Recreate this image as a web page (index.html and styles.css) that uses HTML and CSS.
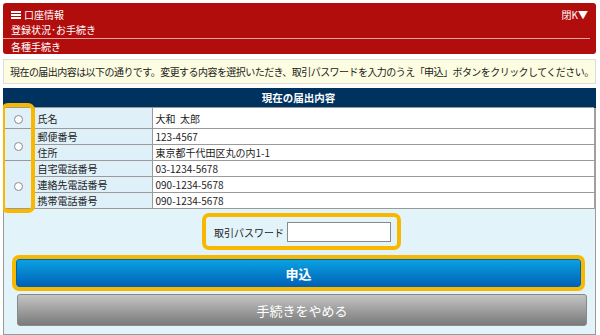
FILE: index.html
```html
<!DOCTYPE html>
<html lang="ja">
<head>
    <meta charset="UTF-8">
    <title>各種手続き</title>
    <link rel="stylesheet" href="styles.css">
</head>
<body>
    <div class="header">
        <div class="header-top">
            <span class="menu-title"><span class="burger"><i></i><i></i><i></i></span>口座情報</span>
            <span class="close">閉K▼</span>
        </div>
        <div class="header-sub">登録状況･お手続き</div>
        <div class="header-page">各種手続き</div>
    </div>

    <p class="notice">現在の届出内容は以下の通りです。変更する内容を選択いただき、取引パスワードを入力のうえ「申込」ボタンをクリックしてください。</p>

    <div class="table-wrap">
        <table class="info">
            <colgroup>
                <col class="col-sel">
                <col class="col-label">
                <col>
            </colgroup>
            <thead>
                <tr><th colspan="3">現在の届出内容</th></tr>
            </thead>
            <tbody>
                <tr class="first">
                    <td class="sel"><span class="radio"></span></td>
                    <td class="label">氏名</td>
                    <td class="value">大和&nbsp;&nbsp;太郎</td>
                </tr>
                <tr>
                    <td class="sel" rowspan="2"><span class="radio"></span></td>
                    <td class="label">郵便番号</td>
                    <td class="value">123-4567</td>
                </tr>
                <tr>
                    <td class="label">住所</td>
                    <td class="value">東京都千代田区丸の内1-1</td>
                </tr>
                <tr>
                    <td class="sel" rowspan="3"><span class="radio"></span></td>
                    <td class="label">自宅電話番号</td>
                    <td class="value">03-1234-5678</td>
                </tr>
                <tr>
                    <td class="label">連絡先電話番号</td>
                    <td class="value">090-1234-5678</td>
                </tr>
                <tr>
                    <td class="label">携帯電話番号</td>
                    <td class="value">090-1234-5678</td>
                </tr>
            </tbody>
        </table>
        <div class="mark-radios"></div>
    </div>

    <div class="panel">
        <div class="pw-row">
            <label class="pw-box">取引パスワード <input type="password" class="pw-input"></label>
        </div>
        <div class="submit-ring">
            <button class="btn btn-blue">申込</button>
        </div>
        <button class="btn btn-grey">手続きをやめる</button>
    </div>
</body>
</html>
```

FILE: styles.css
```css
body {
    margin: 3px 4px 0 3px;
    font-family: "Noto Sans CJK JP", "DejaVu Sans", sans-serif;
    font-size: 10px;
    color: #222;
    background: #fff;
}
.header {
    background-color: #b20d0d;
    color: #fff;
    border-radius: 3px;
    padding: 3px 6px 0 8px;
    height: 48px;
}
.header-top {
    display: flex;
    justify-content: space-between;
    align-items: center;
    height: 15px;
    line-height: 15px;
    padding-top: 1px;
}
.menu-title {
    display: flex;
    align-items: center;
}
.burger {
    display: inline-flex;
    flex-direction: column;
    gap: 1px;
    width: 10px;
    margin-right: 3px;
}
.burger i {
    display: block;
    height: 2px;
    background: #fff;
}
.close {
    font-size: 10px;
    margin-right: 2px;
}
.header-sub {
    line-height: 16px;
    height: 16px;
    border-bottom: 1px solid #e8a0a0;
    margin-left: -8px;
    padding-left: 8px;
}
.header-page {
    line-height: 16px;
}
.notice {
    margin: 5px 0 0;
    height: 23px;
    line-height: 23px;
    padding: 0 6px;
    background-color: #fdfde1;
    border: 1px solid #ddd;
    font-size: 10px;
    letter-spacing: -0.55px;
    white-space: nowrap;
    overflow: hidden;
}
.table-wrap {
    position: relative;
    margin-top: 4px;
}
.info {
    width: 100%;
    border-collapse: collapse;
    table-layout: fixed;
}
.col-sel {
    width: 31px;
}
.col-label {
    width: 118px;
}
.info th {
    background-color: #003260;
    color: #fff;
    font-size: 10.5px;
    font-weight: bold;
    height: 19px;
    padding: 0;
    text-align: center;
    border-right: 2px solid #003260;
}
.info td {
    border: 1px solid #9a9a9a;
    padding: 0 3px;
    height: 15px;
    line-height: 15px;
    white-space: nowrap;
}
.info tr.first td {
    height: 20px;
}
.info td.sel {
    background-color: #dff0f8;
    text-align: center;
    border-left: none;
}
.info td.label {
    background-color: #dff0f8;
}
.info td.value {
    background: #fff;
    border-right: 2px solid #a0a0a0;
}
.radio {
    display: inline-block;
    width: 7px;
    height: 7px;
    border: 1px solid #8a8a8a;
    border-radius: 50%;
    background: #fff;
    vertical-align: middle;
}
.mark-radios {
    position: absolute;
    left: -2px;
    top: 15px;
    width: 26px;
    height: 102px;
    border: 4px solid #f8b800;
    border-radius: 7px;
}
.panel {
    background-color: #e2f3f9;
    border: 1px solid #9a9a9a;
    border-top: none;
    padding: 5px 10px 8px 8px;
    margin-top: -1px;
}
.pw-row {
    display: flex;
    justify-content: center;
    padding-left: 6px;
}
.pw-box {
    display: flex;
    align-items: center;
    gap: 3px;
    border: 4px solid #f8b800;
    border-radius: 7px;
    padding: 5px 6px 4px 8px;
    font-size: 10px;
}
.pw-input {
    width: 98px;
    height: 18px;
    margin: 0;
    border: 1px solid #8a8a8a;
    padding: 0 2px;
    background: #fff;
}
.submit-ring {
    margin-top: 5px;
    border: 4px solid #f8b800;
    border-radius: 7px;
}
.btn {
    display: block;
    width: 100%;
    border: none;
    border-radius: 3px;
    color: #fff;
    font-family: "Noto Sans CJK JP", sans-serif;
    font-size: 13px;
    font-weight: bold;
    text-align: center;
    cursor: pointer;
}
.btn-blue {
    height: 28px;
    background: linear-gradient(#0aa2e2, #0062b8);
    border: 1px solid #0063aa;
}
.btn-grey {
    height: 32px;
    margin-top: 3px;
    margin-left: 5px;
    width: calc(100% - 3px);
    background: linear-gradient(#c4c4c4, #7a7a7a);
    border: 1px solid #888;
    font-weight: normal;
}
```
